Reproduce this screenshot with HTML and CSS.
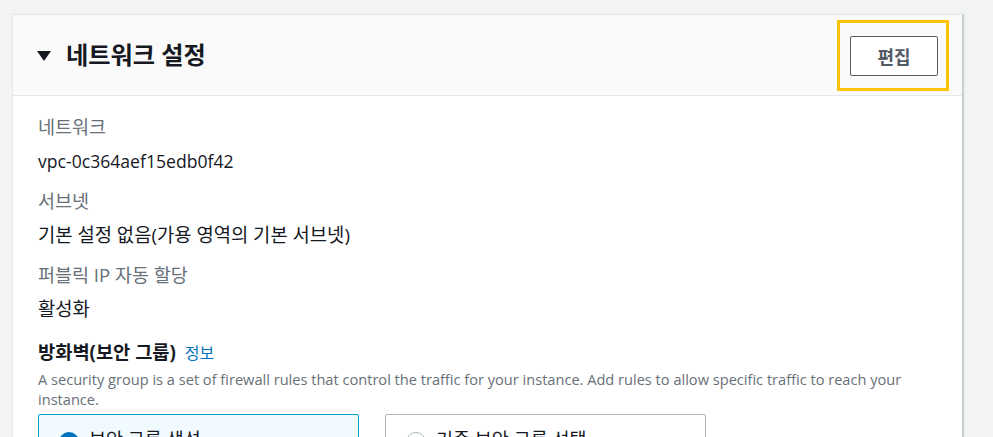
FILE: index.html
```html
<!DOCTYPE html>
<html lang="ko">
<head>
    <meta charset="UTF-8">
    <meta name="viewport" content="width=device-width, initial-scale=1.0">
    <title>네트워크 설정</title>
    <link rel="stylesheet" href="styles.css">
</head>
<body>
    <div class="panel">
        <div class="panel-header">
            <div class="panel-title">
                <span class="caret"></span>
                <h2>네트워크 설정</h2>
            </div>
            <div class="focus-ring">
                <button class="btn">편집</button>
            </div>
        </div>

        <div class="panel-body">
            <div class="field">
                <div class="field-label">네트워크</div>
                <div class="field-value latin">vpc-0c364aef15edb0f42</div>
            </div>
            <div class="field">
                <div class="field-label">서브넷</div>
                <div class="field-value">기본 설정 없음(가용 영역의 기본 서브넷)</div>
            </div>
            <div class="field">
                <div class="field-label">퍼블릭 IP 자동 할당</div>
                <div class="field-value">활성화</div>
            </div>

            <div class="section">
                <h3>방화벽(보안 그룹) <a href="#" class="info">정보</a></h3>
                <p class="desc">A security group is a set of firewall rules that control the traffic for your instance. Add rules to allow specific traffic to reach your instance.</p>

                <div class="tiles">
                    <label class="tile selected">
                        <span class="radio"></span>
                        <span>보안 그룹 생성</span>
                    </label>
                    <label class="tile">
                        <span class="radio"></span>
                        <span>기존 보안 그룹 선택</span>
                    </label>
                </div>
            </div>
        </div>
    </div>
</body>
</html>
```

FILE: styles.css
```css
body {
    margin: 0;
    padding: 14px 30px 0 12px;
    background: #f2f3f3;
    font-family: "Open Sans", "Noto Sans CJK KR", sans-serif;
    color: #16191f;
    height: 437px;
    overflow: hidden;
    box-sizing: border-box;
}

.panel {
    background: white;
    border: 1px solid #e4e7e7;
    border-right-color: #c6cbcb;
    box-shadow: 1px 0 1px rgba(0, 28, 36, 0.15);
}

.panel-header {
    display: flex;
    align-items: center;
    justify-content: space-between;
    height: 80px;
    padding: 0 13px 0 24px;
    background: #fafafa;
    border-bottom: 1px solid #e4e7e7;
}

.panel-title {
    display: flex;
    align-items: center;
    gap: 15px;
}

.caret {
    width: 0;
    height: 0;
    border-left: 7px solid transparent;
    border-right: 7px solid transparent;
    border-top: 10px solid #16191f;
    margin-top: 1px;
}

.panel-title h2 {
    margin: 0;
    font-size: 24.2px;
    font-weight: 700;
    line-height: 30px;
}

.focus-ring {
    border: 3px solid #ffc200;
    padding: 13px 8px 12px 10px;
}

.btn {
    display: block;
    width: 88px;
    height: 40px;
    background: white;
    border: 1px solid #545b64;
    border-radius: 2px;
    color: #545b64;
    font-family: inherit;
    font-size: 18px;
    font-weight: 700;
}

.panel-body {
    padding: 19px 25px 0;
}

.field {
    margin-bottom: 16px;
}

.field-label {
    font-size: 18.5px;
    line-height: 24px;
    color: #687078;
    margin-bottom: 10px;
}

.field-value {
    font-size: 18.8px;
    line-height: 24px;
}

.field-value.latin {
    font-size: 17.6px;
}

.section {
    margin-top: 19px;
}

.section h3 {
    margin: 0;
    font-size: 18.7px;
    font-weight: 700;
    line-height: 24px;
}

.info {
    margin-left: 4px;
    color: #0073bb;
    text-decoration: none;
    font-size: 16px;
    font-weight: 400;
}

.desc {
    margin: 4px 0 5px;
    font-size: 14.6px;
    line-height: 20px;
    color: #687078;
}

.tiles {
    display: flex;
    gap: 26px;
}

.tile {
    display: flex;
    align-items: flex-start;
    gap: 10px;
    width: 321px;
    height: 56px;
    padding: 12px 20px 0;
    box-sizing: border-box;
    border: 1px solid #aab7b8;
    border-radius: 2px;
    font-size: 18.5px;
    line-height: 24px;
}

.tile.selected {
    background: #f1faff;
    border-color: #00a1c9;
}

.radio {
    width: 20px;
    height: 20px;
    margin-top: 5px;
    border-radius: 50%;
    border: 1px solid #aab7b8;
    background: white;
    box-sizing: border-box;
}

.tile.selected .radio {
    border: 6px solid #0073bb;
}
```
